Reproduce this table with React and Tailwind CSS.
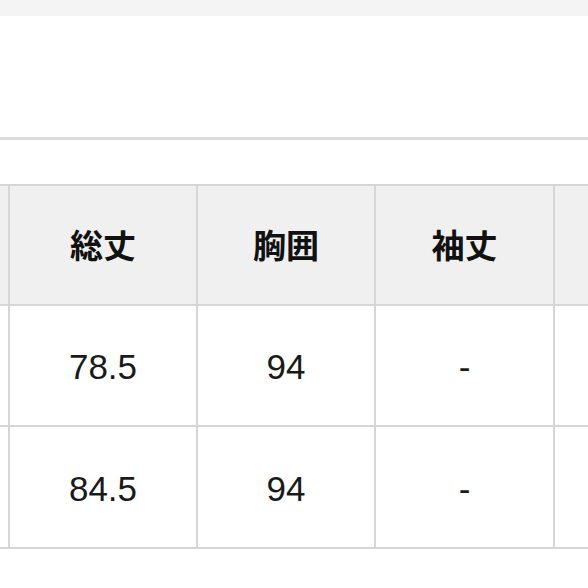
import React from 'react'

const header = ['', '総丈', '胸囲', '袖丈', '']
const rows = [
  ['', '78.5', '94', '-', ''],
  ['', '84.5', '94', '-', ''],
]

export default function App() {
  return (
    <div
      className="w-[588px] h-[588px] bg-white overflow-hidden text-[#1a1a1a]"
      style={{ fontFamily: '"Liberation Sans", Arial, "Noto Sans CJK JP", sans-serif' }}
    >
      <div className="h-[16px] bg-[#f4f4f4]" />
      <div className="h-[121px]" />
      <div className="h-[3px] bg-[#dcdcdc]" />
      <div className="h-[44px]" />

      <div className="grid grid-cols-[8px_186px_176px_177px_1fr] grid-rows-[118px_119px_120px] gap-[2px] py-[2px] bg-[#d6d6d6]">
        {header.map((h, i) => (
          <div
            key={'h' + i}
            className="bg-[#f0f0f0] flex items-center justify-center text-[33px] font-bold text-[#111]"
            style={{ fontFamily: '"Noto Sans CJK JP", sans-serif' }}
          >
            {h}
          </div>
        ))}
        {rows.map((r, ri) =>
          r.map((c, ci) => (
            <div key={ri + '-' + ci} className="bg-white flex items-center justify-center text-[35px] pt-[4px]">
              {c}
            </div>
          ))
        )}
      </div>
    </div>
  )
}
